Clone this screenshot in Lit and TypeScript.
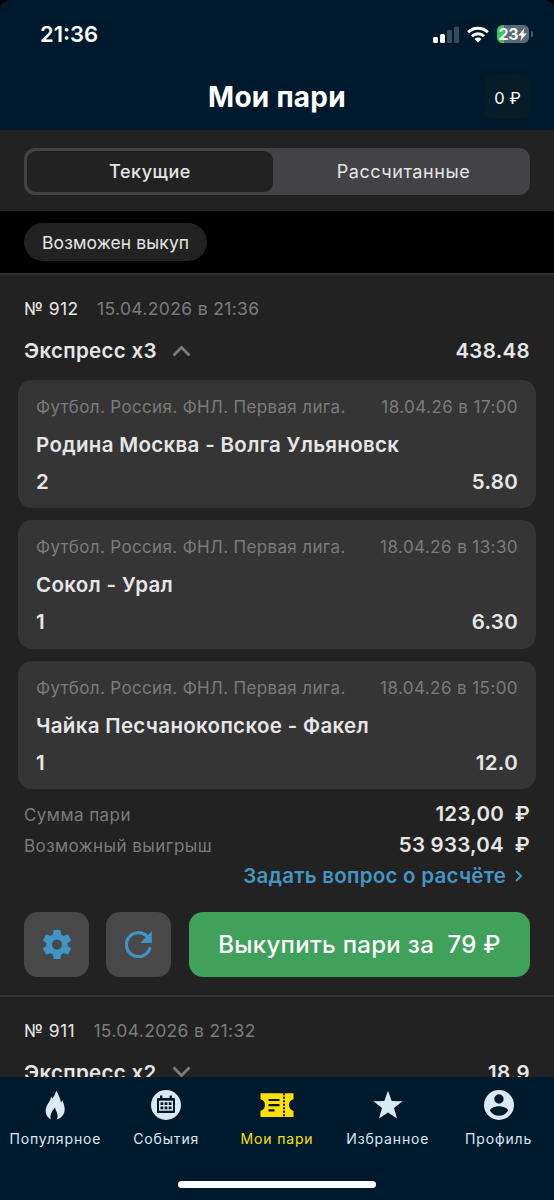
import { LitElement, html, css, svg } from "lit";
import { customElement, property } from "lit/decorators.js";
import { classMap } from "lit/directives/class-map.js";

interface Leg {
  league: string;
  time: string;
  teams: string;
  pick: string;
  odds: string;
}

const LEAGUE = "Футбол. Россия. ФНЛ. Первая лига.";

const LEGS: Leg[] = [
  { league: LEAGUE, time: "18.04.26 в 17:00", teams: "Родина Москва - Волга Ульяновск", pick: "2", odds: "5.80" },
  { league: LEAGUE, time: "18.04.26 в 13:30", teams: "Сокол - Урал", pick: "1", odds: "6.30" },
  { league: LEAGUE, time: "18.04.26 в 15:00", teams: "Чайка Песчанокопское - Факел", pick: "1", odds: "12.0" },
];

const flame = svg`<svg width="30" height="30" viewBox="0 0 30 30"><path fill="currentColor" d="M16.200 0.600c-.6 3.100-1.700 5-3.500 7.300-1 1.100-1.300-.6-1.500-1.600-.5 3.600-1.800 5.200-3.500 7.900C3.900 20.100 5.600 26.600 11 29.500c-1.200-3.300-.4-7.400 4.300-12-.3 3.300 4.200 6.600 1.500 11.900 5.700-1.600 8.300-6 7.800-11.400-.3-3.400-1.600-5.600-2.200-8-.5 1-.6 1.800-1.400 2.400C20.200 8.500 18.200 4 16.200 .6z"/></svg>`;

const calendar = svg`<svg width="30" height="30" viewBox="0 0 30 30"><circle cx="15" cy="15" r="15" fill="currentColor"/><g fill="#001a2d"><rect x="6" y="8" width="18" height="15" rx="1"/><rect x="9" y="5.500" width="2.400" height="4"/><rect x="18.600" y="5.500" width="2.400" height="4"/></g><rect x="8" y="10.700" width="14" height="10" fill="currentColor"/><g fill="#001a2d"><path d="M9.500 12.200h2.800v2.800h-2.800zM13.600 12.200h2.800v2.800h-2.800zM17.700 12.200h2.800v2.800h-2.800zM9.500 16.400h2.800v2.800h-2.800zM13.600 16.400h2.800v2.800h-2.800zM17.700 16.400h2.800v2.800h-2.800z"/></g></svg>`;

const ticket = svg`<svg width="34" height="30" viewBox="0 0 34 30"><path fill="currentColor" d="M.5 3.300h33v6a6 6 0 0 0 0 11.600v6H.5v-6a6 6 0 0 0 0-11.600z"/><g stroke="#001a2d" stroke-width="2.200" fill="none"><path d="M8.500 10h11M8.500 15.200h11M8.500 20.400h6"/><path d="M24 3.300v24" stroke-width="2" stroke-dasharray="2 1.500"/></g></svg>`;

const star = svg`<svg width="30" height="30" viewBox="0 0 30 30"><path fill="currentColor" d="M15 .8l3.700 10.100 10.800.4-8.500 6.700 3 10.400L15 22.400l-9 6 3-10.400L.5 11.300l10.800-.4z"/></svg>`;

const profile = svg`<svg width="30" height="30" viewBox="0 0 30 30"><path fill="currentColor" fill-rule="evenodd" d="M15 0a15 15 0 1 1 0 30 15 15 0 0 1 0-30zM15 4.300a4.700 4.700 0 1 0 0 9.400 4.700 4.700 0 0 0 0-9.400zM15 16.300c-4.500 0-9 2.200-9 4.400 1.800 3.100 5.200 5 9 5s7.200-1.900 9-5c0-2.200-4.500-4.400-9-4.400z"/></svg>`;

const TABS = [
  { label: "Популярное", icon: flame, active: false },
  { label: "События", icon: calendar, active: false },
  { label: "Мои пари", icon: ticket, active: true },
  { label: "Избранное", icon: star, active: false },
  { label: "Профиль", icon: profile, active: false },
];

@customElement("leg-card")
export class LegCard extends LitElement {
  @property({ attribute: false }) leg!: Leg;

  static styles = css`
    :host {
      display: block;
      box-sizing: border-box;
      height: 128.4px;
      padding: 14px 18px;
      border-radius: 14px;
      background: #353535;
      color: #e6e6e6;
    }
    .row {
      display: flex;
      justify-content: space-between;
      white-space: nowrap;
    }
    .meta {
      font-size: 17px;
      line-height: 27px;
      letter-spacing: 0.35px;
      color: #7c7c7c;
    }
    .time {
      letter-spacing: 0.42px;
    }
    .strong {
      font-size: 20.500px;
      line-height: 37px;
      font-weight: 600;
      letter-spacing: 0.32px;
    }
    .teams {
      margin-top: 5px;
    }
  `;

  render() {
    return html`
      <div class="row meta"><span>${this.leg.league}</span><span class="time">${this.leg.time}</span></div>
      <div class="row strong teams"><span>${this.leg.teams}</span></div>
      <div class="row strong"><span>${this.leg.pick}</span><span>${this.leg.odds}</span></div>
    `;
  }
}

@customElement("app-root")
export class AppRoot extends LitElement {
  static styles = css`
    :host {
      display: flex;
      flex-direction: column;
      height: 1200px;
      overflow: hidden;
      background: #222222;
      color: #e6e6e6;
      font-family: Inter, "Liberation Sans", sans-serif;
    }
    svg {
      display: block;
      flex: none;
    }
    .header {
      flex: none;
      height: 130px;
      background: #000;
      color: #fff;
    }
    .header-inner {
      height: 130px;
      border-radius: 9px 9px 0 0;
      background: #001a2d;
    }
    .status {
      display: flex;
      justify-content: space-between;
      align-items: center;
      height: 68px;
      padding: 0 21.500px 0 40px;
    }
    .clock {
      font-size: 22px;
      font-weight: 600;
    }
    .indicators {
      display: flex;
      align-items: center;
    }
    .wifi {
      margin: 0 8px 0 7.500px;
    }
    .battery {
      display: flex;
      align-items: center;
      justify-content: center;
      width: 32.500px;
      height: 18px;
      border-radius: 5.500px;
      background: linear-gradient(90deg, #34c759 7.500px, #58697a 7.500px);
      font-size: 16px;
      font-weight: 700;
      letter-spacing: -0.5px;
    }
    .cap {
      width: 2px;
      height: 6px;
      margin-left: 1.500px;
      border-radius: 0 2px 2px 0;
      background: #4b5b6a;
    }
    .titlebar {
      display: grid;
      grid-template-columns: 1fr auto 1fr;
      align-items: center;
      height: 58px;
      padding: 0 24px;
    }
    .title {
      grid-column: 2;
      font-size: 28px;
      font-weight: 700;
      letter-spacing: 0.25px;
    }
    .balance {
      justify-self: end;
      width: 45px;
      height: 44px;
      border-radius: 6px;
      background: #071c29;
      font-size: 16.500px;
      line-height: 46px;
      text-align: center;
      white-space: nowrap;
    }
    .segments {
      flex: none;
      display: flex;
      box-sizing: border-box;
      height: 47px;
      margin: 18px 24px 16px;
      padding: 3px;
      border-radius: 11px;
      background: #434247;
      font-size: 18px;
      line-height: 41px;
      letter-spacing: 0.55px;
      text-align: center;
    }
    .segment {
      flex: 1;
      padding-left: 7px;
      border-radius: 9px;
    }
    .segment.on {
      flex: 0 0 246px;
      padding: 0;
      background: #222222;
      font-weight: 500;
    }
    .filters {
      flex: none;
      display: flex;
      align-items: center;
      box-sizing: border-box;
      height: 64px;
      padding: 0 24px;
      background: #000;
      border-bottom: 2px solid #303030;
    }
    .chip {
      height: 38px;
      padding: 0 18px;
      border-radius: 19px;
      background: #222222;
      font-size: 17.500px;
      line-height: 39px;
      letter-spacing: 0.1px;
    }
    .list {
      flex: 1;
      min-height: 0;
      overflow: hidden;
    }
    .bet {
      border-bottom: 2px solid #343434;
      padding: 21px 18px 17.500px;
    }
    .bet-id {
      display: flex;
      gap: 18.500px;
      padding: 0 6px;
      font-size: 17.500px;
      line-height: 26px;
      letter-spacing: 0.35px;
    }
    .muted {
      color: #7c7c7c;
    }
    .bet-head {
      display: flex;
      align-items: center;
      height: 40px;
      padding: 8.500px 6px 0;
      font-size: 20.500px;
      font-weight: 600;
      letter-spacing: 0.32px;
    }
    .chevron {
      margin-left: 15px;
      color: #7c7c7c;
    }
    .total {
      margin-left: auto;
    }
    .legs {
      display: grid;
      gap: 12px;
      margin-top: 9.500px;
    }
    .sums {
      margin-top: 9px;
      padding: 0 6px;
    }
    .sum {
      display: flex;
      justify-content: space-between;
      align-items: center;
      height: 31px;
    }
    .sum-label {
      padding-top: 3px;
      font-size: 17px;
      letter-spacing: 0.45px;
      color: #7c7c7c;
    }
    .sum-value {
      font-size: 20.500px;
      font-weight: 600;
      letter-spacing: 0.25px;
      white-space: pre;
    }
    .ask {
      display: flex;
      justify-content: flex-end;
      align-items: center;
      gap: 9px;
      height: 31px;
      padding-right: 8px;
      font-size: 20.500px;
      font-weight: 600;
      letter-spacing: 0.25px;
      color: #4696c4;
    }
    .actions {
      display: grid;
      grid-template-columns: 65px 65px 1fr;
      gap: 17px;
      height: 65px;
      margin-top: 21px;
      padding: 0 6px;
    }
    .square {
      display: grid;
      place-items: center;
      border-radius: 14px;
      background: #484848;
      color: #4094c6;
    }
    .cashout {
      margin-left: 1px;
      border-radius: 14px;
      background: #3fa15a;
      color: #fff;
      font-size: 24px;
      font-weight: 500;
      line-height: 65px;
      letter-spacing: 0.3px;
      text-align: center;
      white-space: pre;
    }
    .tabs {
      flex: none;
      display: grid;
      grid-template-columns: repeat(5, 1fr);
      box-sizing: border-box;
      height: 104px;
      padding-top: 13px;
      background: #001a2d;
      color: #dbe9f5;
    }
    .tab {
      display: flex;
      flex-direction: column;
      align-items: center;
      gap: 9px;
      font-size: 14px;
      line-height: 20px;
      letter-spacing: 0.85px;
      white-space: nowrap;
    }
    .tab.on {
      color: #ffe000;
    }
    .homebar {
      flex: none;
      display: flex;
      justify-content: center;
      height: 19px;
      background: #001a2d;
    }
    .home {
      width: 198px;
      height: 7px;
      border-radius: 4px;
      background: #fff;
    }
  `;

  private betHead(id: string, date: string, name: string, total: string, open: boolean) {
    return html`
      <div class="bet-id"><span>№ ${id}</span><span class="muted">${date}</span></div>
      <div class="bet-head">
        <span>${name}</span>
        <svg class="chevron" width="19" height="12" viewBox="0 0 19 12">
          <path d=${open ? "M1.500 10.500 9.500 2.500l8 8" : "M1.500 1.500l8 8 8-8"} fill="none" stroke="currentColor" stroke-width="2.800" />
        </svg>
        <span class="total">${total}</span>
      </div>
    `;
  }

  render() {
    return html`
      <header class="header">
        <div class="header-inner">
          <div class="status">
            <span class="clock">21:36</span>
            <div class="indicators">
              <svg width="26" height="17" viewBox="0 0 26 17">
                <g fill="#fff"><rect x="0" y="11" width="5" height="6" rx="1.500" /><rect x="7" y="8" width="5" height="9" rx="1.500" /></g>
                <g fill="#394b5b"><rect x="14" y="4" width="5" height="13" rx="1.500" /><rect x="21" y="0.500" width="5" height="16.500" rx="1.500" /></g>
              </svg>
              <svg class="wifi" width="22" height="17" viewBox="0 0 22 17">
                <g fill="none" stroke="#fff" stroke-width="3"><path d="M1.200 6.200a14 14 0 0 1 19.600 0" /><path d="M5 10.300a8.600 8.600 0 0 1 12 0" /></g>
                <path fill="#fff" d="M11 16.500l-3.500-3.600a5 5 0 0 1 7 0z" />
              </svg>
              <div class="battery">
                <span>23</span>
                <svg width="9" height="13" viewBox="0 0 9 13"><path fill="#fff" d="M6.500 0 .2 7.400h3.400L2.400 13 8.800 5.500H5.300z" /></svg>
              </div>
              <div class="cap"></div>
            </div>
          </div>
          <div class="titlebar">
            <div class="title">Мои пари</div>
            <div class="balance">0 ₽</div>
          </div>
        </div>
      </header>

      <div class="segments">
        <div class="segment on">Текущие</div>
        <div class="segment">Рассчитанные</div>
      </div>
      <div class="filters"><div class="chip">Возможен выкуп</div></div>

      <main class="list">
        <section class="bet">
          ${this.betHead("912", "15.04.2026 в 21:36", "Экспресс x3", "438.48", true)}
          <div class="legs">${LEGS.map((leg) => html`<leg-card .leg=${leg}></leg-card>`)}</div>
          <div class="sums">
            <div class="sum"><span class="sum-label">Сумма пари</span><span class="sum-value">123,00  ₽</span></div>
            <div class="sum"><span class="sum-label">Возможный выигрыш</span><span class="sum-value">53 933,04  ₽</span></div>
            <div class="ask">
              <span>Задать вопрос о расчёте</span>
              <svg width="7" height="12" viewBox="0 0 7 12"><path d="M1 1l5 5-5 5" fill="none" stroke="currentColor" stroke-width="2" /></svg>
            </div>
          </div>
          <div class="actions">
            <div class="square">
              <svg width="28" height="29" viewBox="2.270 2 19.460 20">
                <path fill="currentColor" d="M19.430 12.980c.04-.32.07-.64.07-.98s-.03-.66-.07-.98l2.110-1.650c.19-.15.24-.42.12-.64l-2-3.460c-.12-.22-.39-.3-.61-.22l-2.490 1c-.52-.4-1.080-.73-1.690-.98l-.38-2.650C14.460 2.180 14.250 2 14 2h-4c-.25 0-.46.18-.49.42l-.38 2.650c-.61.25-1.170.59-1.690.98l-2.490-1c-.23-.09-.49 0-.61.22l-2 3.460c-.13.22-.07.49.12.64l2.110 1.650c-.04.32-.07.65-.07.98s.03.66.07.98l-2.110 1.650c-.19.15-.24.42-.12.64l2 3.460c.12.22.39.3.61.22l2.490-1c.52.4 1.080.73 1.690.98l.38 2.650c.03.24.24.42.49.42h4c.25 0 .46-.18.49-.42l.38-2.650c.61-.25 1.170-.59 1.690-.98l2.490 1c.23.09.49 0 .61-.22l2-3.460c.12-.22.07-.49-.12-.64zM12 15.500c-1.930 0-3.500-1.570-3.500-3.500s1.570-3.500 3.500-3.500 3.500 1.570 3.500 3.500-1.570 3.500-3.500 3.500z" />
              </svg>
            </div>
            <div class="square">
              <svg width="27" height="27" viewBox="0 0 27 27">
                <path d="M24.800 17.500A12 12 0 1 1 21.500 4.800" fill="none" stroke="currentColor" stroke-width="3.200" stroke-linecap="round" />
                <path d="M26.800.3V12H15.200z" fill="currentColor" />
              </svg>
            </div>
            <div class="cashout">Выкупить пари за  79 ₽</div>
          </div>
        </section>
        <section class="bet">${this.betHead("911", "15.04.2026 в 21:32", "Экспресс x2", "18.9", false)}</section>
      </main>

      <nav class="tabs">
        ${TABS.map((t) => html`<div class=${classMap({ tab: true, on: t.active })}>${t.icon}<span>${t.label}</span></div>`)}
      </nav>
      <div class="homebar"><div class="home"></div></div>
    `;
  }
}
